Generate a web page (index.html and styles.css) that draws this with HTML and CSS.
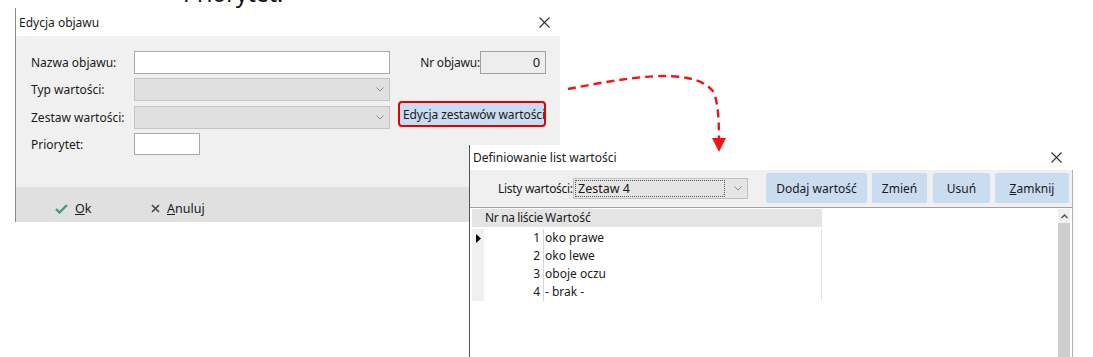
FILE: index.html
```html
<!DOCTYPE html>
<html lang="pl">
<head>
    <meta charset="utf-8">
    <link rel="stylesheet" href="styles.css">
    <title>Edycja objawu</title>
</head>
<body>
<div class="screen">
    <div class="caption"><span>Priorytet:</span></div>

    <div class="dialog dlg-objaw">
        <div class="titlebar">
            <span>Edycja objawu</span>
            <svg class="close" width="11" height="11" viewBox="0 0 11 11"><path d="M0.5 0.5 L10.5 10.5 M10.5 0.5 L0.5 10.5" stroke="#333" stroke-width="1.1"/></svg>
        </div>
        <div class="body">
            <div class="form">
                <label class="lbl">Nazwa objawu:</label>
                <div class="edit"></div>
                <div class="nr"><span>Nr objawu:</span><div class="edit ro">0</div></div>

                <label class="lbl">Typ wartości:</label>
                <div class="combo dis">
                    <svg width="8" height="5" viewBox="0 0 8 5"><path d="M0.5 0.5 L4 4 L7.5 0.5" fill="none" stroke="#8a8a8a" stroke-width="1"/></svg>
                </div>
                <button class="btn-sets">Edycja zestawów wartości</button>

                <label class="lbl">Zestaw wartości:</label>
                <div class="combo dis">
                    <svg width="8" height="5" viewBox="0 0 8 5"><path d="M0.5 0.5 L4 4 L7.5 0.5" fill="none" stroke="#8a8a8a" stroke-width="1"/></svg>
                </div>

                <label class="lbl">Priorytet:</label>
                <div class="edit short"></div>
            </div>
        </div>
        <div class="footer">
            <span class="act act-ok">
                <svg width="13" height="10" viewBox="0 0 13 10"><path d="M1 5 L4.5 8.5 L12 1" fill="none" stroke="#3aa374" stroke-width="2.4"/></svg>
                <span><u>O</u>k</span>
            </span>
            <span class="act">
                <svg width="9" height="9" viewBox="0 0 9 9"><path d="M1 1 L8 8 M8 1 L1 8" stroke="#444" stroke-width="1.6"/></svg>
                <span><u>A</u>nuluj</span>
            </span>
        </div>
    </div>

    <div class="dialog dlg-listy">
        <div class="titlebar">
            <span>Definiowanie list wartości</span>
            <svg class="close" width="11" height="11" viewBox="0 0 11 11"><path d="M0.5 0.5 L10.5 10.5 M10.5 0.5 L0.5 10.5" stroke="#333" stroke-width="1.1"/></svg>
        </div>
        <div class="toolbar">
            <span class="tb-label">Listy wartości:</span>
            <div class="combo lists">
                <div class="combo-text">Zestaw 4</div>
                <svg width="8" height="5" viewBox="0 0 8 5"><path d="M0.5 0.5 L4 4 L7.5 0.5" fill="none" stroke="#8a8a8a" stroke-width="1"/></svg>
            </div>
            <div class="buttons">
                <button class="tbtn w-add">Dodaj wartość</button>
                <button class="tbtn w-chg">Zmień</button>
                <button class="tbtn w-del">Usuń</button>
                <button class="tbtn w-cls"><u>Z</u>amknij</button>
            </div>
        </div>
        <div class="gridarea">
            <div class="grid">
                <div class="row head">
                    <div class="ind"></div>
                    <div class="c-nr">Nr na liście</div>
                    <div class="c-val">Wartość</div>
                </div>
                <div class="row first">
                    <div class="ind"><svg width="5" height="9" viewBox="0 0 5 9"><path d="M0 0 L5 4.5 L0 9 Z" fill="#000"/></svg></div>
                    <div class="c-nr">1</div>
                    <div class="c-val">oko prawe</div>
                </div>
                <div class="row">
                    <div class="ind"></div>
                    <div class="c-nr">2</div>
                    <div class="c-val">oko lewe</div>
                </div>
                <div class="row">
                    <div class="ind"></div>
                    <div class="c-nr">3</div>
                    <div class="c-val">oboje oczu</div>
                </div>
                <div class="row">
                    <div class="ind"></div>
                    <div class="c-nr">4</div>
                    <div class="c-val">- brak -</div>
                </div>
            </div>
            <div class="scrollbar">
                <div class="sb-up"><svg width="7" height="5" viewBox="0 0 7 5"><path d="M0.5 4 L3.5 1 L6.5 4" fill="none" stroke="#555" stroke-width="1.5"/></svg></div>
                <div class="sb-thumb"></div>
            </div>
        </div>
    </div>

    <svg class="arrow" width="1093" height="357" viewBox="0 0 1093 357">
        <path d="M568 89 C625 78 690 66 712 90 Q719 99 719 138" fill="none" stroke="#f01414" stroke-width="2.4" stroke-dasharray="8 5"/>
        <path d="M712 138 L726 138 L719 152 Z" fill="#f01414"/>
    </svg>
</div>
</body>
</html>
```

FILE: styles.css
```css
* {
    margin: 0;
    padding: 0;
    box-sizing: border-box;
}
body {
    background-color: white;
    font-family: "Noto Sans", Arial, sans-serif;
    font-size: 12px;
    color: #1a1a1a;
}
.screen {
    position: relative;
    width: 1093px;
    height: 357px;
    overflow: hidden;
}
.caption {
    height: 8px;
    overflow: hidden;
    padding-left: 183px;
}
.caption span {
    display: block;
    font-size: 23px;
    line-height: 23px;
    margin-top: -18px;
    color: #111;
}

/* windows */
.dialog {
    position: absolute;
    border-left: 1px solid #8a8a8a;
}
.titlebar {
    display: flex;
    align-items: center;
    justify-content: space-between;
    background-color: white;
    padding-left: 3px;
}
.dlg-objaw {
    left: 15px;
    top: 8px;
    width: 545px;
}
.dlg-objaw .titlebar {
    height: 28px;
    padding-right: 10px;
}
.dlg-objaw .body {
    height: 151px;
    background-color: #f0f0f0;
    padding: 15px 0 0 15px;
}
.form {
    display: grid;
    grid-template-columns: 103px 256px 156px;
    grid-template-rows: 27px 28px 27px 22px;
}
.lbl {
    line-height: 23px;
    height: 23px;
}
.edit {
    height: 23px;
    background-color: white;
    border: 1px solid #a9a9a9;
}
.edit.short {
    width: 66px;
    height: 22px;
}
.edit.ro {
    width: 66px;
    background-color: #ededed;
    border-color: #a0a0a0;
    text-align: right;
    padding-right: 5px;
    line-height: 20px;
    font-size: 13px;
}
.nr {
    display: flex;
    justify-content: flex-end;
    align-items: center;
    height: 23px;
    letter-spacing: -0.2px;
}
.combo {
    display: flex;
    align-items: center;
    justify-content: flex-end;
    height: 23px;
    border: 1px solid #c4c4c4;
    padding-right: 5px;
}
.combo.dis {
    background-color: #e0e0e0;
}
.btn-sets {
    grid-column: 3;
    grid-row: 2 / span 2;
    justify-self: end;
    align-self: end;
    width: 148px;
    height: 26px;
    margin-bottom: 6px;
    background-color: #c8dcf2;
    border: 2px solid #e60000;
    border-radius: 4px;
    font-family: inherit;
    font-size: 12px;
    letter-spacing: -0.1px;
    color: #1a1a1a;
    text-align: left;
    padding-left: 3px;
    white-space: nowrap;
    overflow: hidden;
}
.footer {
    height: 35px;
    background-color: #e0e0e0;
    display: flex;
    align-items: center;
    padding-left: 39px;
    padding-top: 8px;
}
.act {
    display: flex;
    align-items: center;
    gap: 7px;
    font-size: 12.5px;
}
.act-ok {
    width: 96px;
}
.dlg-listy {
    left: 469px;
    top: 145px;
    width: 604px;
    height: 212px;
    border-left-color: #555;
}
.dlg-listy .titlebar {
    height: 25px;
    padding-right: 11px;
}
.toolbar {
    height: 38px;
    background-color: #f0f0f0;
    border-bottom: 1px solid #a0a0a0;
    border-right: 1px solid #b0b0b0;
    display: flex;
    align-items: center;
    padding-left: 28px;
    padding-bottom: 1px;
}
.tb-label {
    width: 75px;
    white-space: nowrap;
    letter-spacing: -0.3px;
}
.combo.lists {
    width: 175px;
    height: 21px;
    background-color: #e5e5e5;
    border-color: #c0c0c0;
    padding: 1px;
    gap: 9px;
}
.combo-text {
    flex: 1;
    height: 17px;
    line-height: 15px;
    border: 1px dotted #555;
    padding-left: 2px;
    font-size: 12.5px;
}
.lists svg {
    margin-right: 4px;
}
.buttons {
    display: flex;
    gap: 5px;
    margin-left: 18px;
}
.tbtn {
    height: 30px;
    background-color: #c9dcf0;
    border: 0;
    border-radius: 2px;
    font-family: inherit;
    font-size: 12px;
    color: #1a1a1a;
}
.w-add { width: 101px; }
.w-chg { width: 55px; }
.w-del { width: 57px; margin-left: 1px; }
.w-cls { width: 74px; }
.gridarea {
    height: 149px;
    background-color: white;
    border-right: 1px solid #b0b0b0;
    display: flex;
    justify-content: space-between;
    padding: 1px 2px 0 2px;
}
.grid {
    width: 350px;
}
.row {
    display: flex;
    height: 18px;
    line-height: 18px;
}
.row.first {
    margin-top: 2px;
}
.row.head {
    background-color: #e4e4e4;
}
.ind {
    width: 12px;
    background-color: #f0f0f0;
    display: flex;
    align-items: center;
    justify-content: center;
}
.head .ind {
    background-color: transparent;
}
.c-nr {
    width: 60px;
    text-align: right;
    padding-right: 3px;
    border-right: 1px solid #d6d6d6;
}
.head .c-nr {
    text-align: left;
    padding-left: 1px;
    border-right: 0;
    white-space: nowrap;
    letter-spacing: -0.35px;
}
.c-val {
    flex: 1;
    padding-left: 1px;
    border-right: 1px solid #e4e4e4;
}
.scrollbar {
    width: 12px;
    display: flex;
    flex-direction: column;
}
.sb-up {
    height: 14px;
    background-color: #f0f0f0;
    display: flex;
    align-items: center;
    justify-content: center;
}
.sb-thumb {
    flex: 1;
    background-color: #cdcdcd;
}
.arrow {
    position: absolute;
    left: 0;
    top: 0;
    pointer-events: none;
}
```
